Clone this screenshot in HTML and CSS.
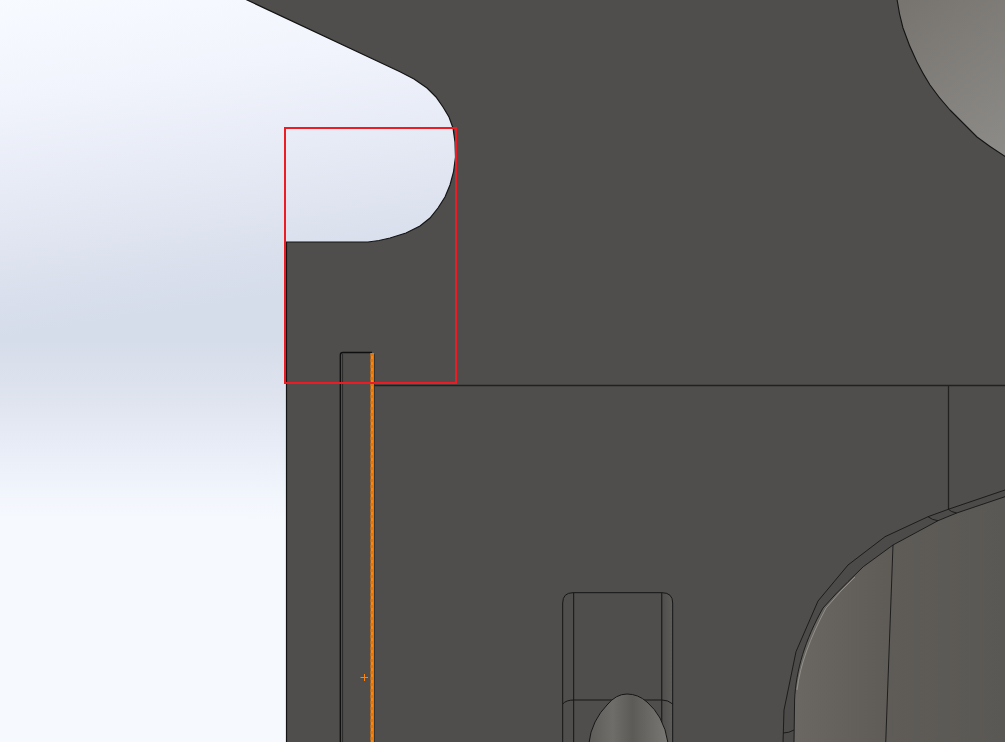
FILE: index.html
```html
<!DOCTYPE html>
<html lang="en">
<head>
<meta charset="utf-8">
<title>CAD viewport</title>
<link rel="stylesheet" href="styles.css">
</head>
<body>
<svg class="scene" width="1005" height="742" viewBox="0 0 1005 742" xmlns="http://www.w3.org/2000/svg">
  <defs>
    <linearGradient id="skyTop" gradientUnits="userSpaceOnUse" x1="0" y1="0" x2="50" y2="330">
      <stop offset="0" stop-color="#f7faff"/>
      <stop offset="0.296" stop-color="#f1f4fc"/>
      <stop offset="0.59" stop-color="#e6eaf5"/>
      <stop offset="0.89" stop-color="#d9dfec"/>
      <stop offset="1" stop-color="#d6ddea"/>
    </linearGradient>
    <linearGradient id="skyBottom" gradientUnits="userSpaceOnUse" x1="0" y1="340" x2="0" y2="520">
      <stop offset="0" stop-color="#d6ddea"/>
      <stop offset="0.333" stop-color="#dfe4ef"/>
      <stop offset="0.611" stop-color="#e9edf7"/>
      <stop offset="1" stop-color="#f6faff"/>
    </linearGradient>
    <linearGradient id="ball" gradientUnits="userSpaceOnUse" x1="900" y1="0" x2="1005" y2="150">
      <stop offset="0" stop-color="#777470"/>
      <stop offset="1" stop-color="#8d8b87"/>
    </linearGradient>
    <linearGradient id="face" gradientUnits="userSpaceOnUse" x1="790" y1="0" x2="1005" y2="0">
      <stop offset="0" stop-color="#6b6864"/>
      <stop offset="0.45" stop-color="#5f5c58"/>
      <stop offset="1" stop-color="#5a5854"/>
    </linearGradient>
    <linearGradient id="dome" gradientUnits="userSpaceOnUse" x1="589" y1="0" x2="668" y2="0">
      <stop offset="0" stop-color="#5f5d5a"/>
      <stop offset="0.3" stop-color="#6f6d69"/>
      <stop offset="0.55" stop-color="#5c5b58"/>
      <stop offset="1" stop-color="#7a7874"/>
    </linearGradient>
    <linearGradient id="strip" gradientUnits="userSpaceOnUse" x1="662" y1="0" x2="673" y2="0">
      <stop offset="0" stop-color="#4f4e4c"/>
      <stop offset="1" stop-color="#5d5c59"/>
    </linearGradient>
  </defs>

  <rect class="sky-top" x="0" y="0" width="1005" height="341"/>
  <rect class="sky-bottom" x="0" y="340" width="1005" height="181"/>
  <rect class="sky-base" x="0" y="520" width="1005" height="222"/>

  <path class="body" d="M245 -1 L400 71.7 L414 79 L427 88 L436 97 L443 107 L449 117 L453 128 L455 142 L455.5 157 L453.5 172 L450 185 L445 197 L438 208 L430 218 L420 226 L406 233 L390 238 L379 240.5 L368 242 L286.5 242 L286.5 743 L1006 743 L1006 -1 Z"/>
  <path class="edge-strong" d="M245 -1 L400 71.7 L414 79 L427 88 L436 97 L443 107 L449 117 L453 128 L455 142 L455.5 157 L453.5 172 L450 185 L445 197 L438 208 L430 218 L420 226 L406 233 L390 238 L379 240.5 L368 242 L286.5 242 L286.5 743"/>

  <path class="ball" d="M897 -1 Q899 14 903 28 Q909 46 917 62 Q923 74 930 85 Q939 98 950 110 L977 137 Q990 147 1006 157 L1006 -1 Z"/>

  <path class="edge-soft" d="M372 385.5 H1005"/>
  <path class="edge-soft" d="M948.5 386 V509"/>

  <path class="edge-heavy" d="M340.3 743 V355 Q340.3 352.5 343 352.5 H372"/>
  <path class="edge-second" d="M342.6 743 V354"/>
  <path class="edge-dark-thin" d="M374.5 743 V354"/>
  <path class="trace" d="M372.2 353 V743"/>
  <path class="trace-dash" d="M372.2 353 V743"/>
  <path class="origin" d="M360.5 677.5 H368 M364.5 674 V681"/>

  <path class="band" d="M1006 490 L948.3 509.3 L928 516.7 L885 536.7 L848 565 L818 601 L796 651.7 L784 710 L783 743 L794 743 L794.6 700 C796 670 805 640 823 608 L836.7 593 L848 581.7 L863.3 566.7 L893 545 L938 520.7 L956.7 513 L1006 496.7 Z"/>
  <path class="face" d="M1006 496.7 L956.7 513 L938 520.7 L893 545 L863.3 566.7 L848 581.7 L836.7 593 L823 608 C805 640 796 670 794.6 700 L794 743 L1006 743 Z"/>
  <path class="edge-thin" d="M1005 490 L948.3 509.3 L928 516.7 L885 536.7 L848 565 L818 601 L796 651.7 L784 710 L783 743"/>
  <path class="edge-thin" d="M1005 496.7 L956.7 513 L938 520.7 L893 545 L863.3 566.7 L848 581.7 L836.7 593 L823 608 C805 640 796 670 794.6 700 L794 743"/>
  <path class="edge-pale" d="M855 577 L840 592 L826 608 C810 638 800 665 797 690"/>
  <path class="edge-thin" d="M893 545 L885.7 743"/>
  <path class="edge-thin" d="M928 516.7 Q932 520 938 520.7"/>
  <path class="edge-thin" d="M948.3 509.3 Q951 512 956.7 513"/>
  <path class="edge-thin" d="M783 733 Q789 733 794 730"/>

  <path class="strip" d="M662 593 H663 Q673 594 672.7 603 V743 H662 Z"/>
  <path class="edge" d="M562.7 743 V603 Q562.7 592.7 573 592.7 H662 Q672.7 592.7 672.7 603 V743"/>
  <path class="edge" d="M573.7 593 V743"/>
  <path class="edge-soft" d="M661.7 593 V743"/>
  <path class="edge" d="M562.7 704 Q566 700 574 700 H662 Q668 700 672.7 704"/>
  <path class="dome" d="M589 743 Q590 732 595 722 Q600 712 607 705 Q616 694 627 694 Q638 694 647 702 Q655 709 660 718 Q666 729 668 743 Z"/>

  <rect class="marker" x="285" y="128" width="171" height="255"/>
</svg>
</body>
</html>
```

FILE: styles.css
```css
html, body {
  margin: 0;
  padding: 0;
  background: #f6faff;
  overflow: hidden;
}
.scene { display: block; }
.scene path { fill: none; }
.sky-top { fill: url(#skyTop); }
.sky-bottom { fill: url(#skyBottom); }
.sky-base { fill: #f6faff; }
.scene .body { fill: #4f4e4c; }
.scene .ball { fill: url(#ball); stroke: #141414; stroke-width: 1.1; }
.scene .band { fill: #4c4b49; }
.scene .face { fill: url(#face); }
.scene .strip { fill: url(#strip); }
.scene .dome { fill: url(#dome); stroke: #161616; stroke-width: 1; }
.edge-strong { stroke: #141414; stroke-width: 1.2; }
.edge { stroke: #161616; stroke-width: 1; }
.edge-heavy { stroke: #0f0f0f; stroke-width: 1.3; }
.edge-second { stroke: #2b2a29; stroke-width: 1; }
.edge-thin { stroke: #161616; stroke-width: 0.9; }
.edge-soft { stroke: #222120; stroke-width: 1.3; }
.edge-dark-thin { stroke: #2e2d2c; stroke-width: 0.8; }
.edge-pale { stroke: #a5a39d; stroke-width: 0.7; }
.trace { stroke: #ff8408; stroke-width: 3.2; }
.trace-dash { stroke: #dd7a14; stroke-width: 3.2; stroke-dasharray: 3 3; }
.origin { stroke: #ff8408; stroke-width: 1; }
.marker { fill: none; stroke: #ed1c24; stroke-width: 2; }
```
